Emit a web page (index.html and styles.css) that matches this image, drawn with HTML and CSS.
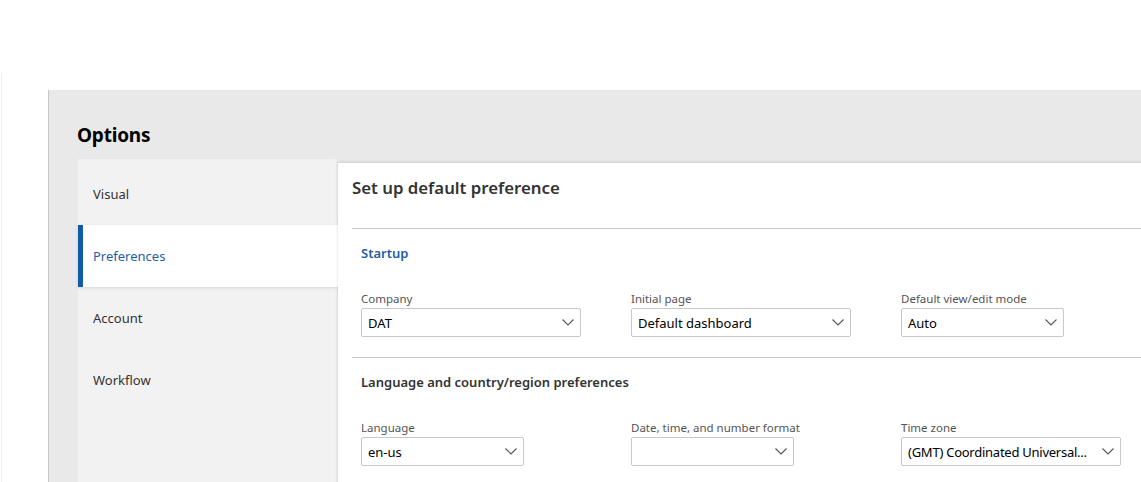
FILE: index.html
```html
<!DOCTYPE html>
<html lang="en">
<head>
<meta charset="utf-8">
<title>Options</title>
<link rel="stylesheet" href="styles.css">
</head>
<body>
<div class="frame">
  <div class="panel">
    <h1 class="title">Options</h1>
    <div class="body">
      <nav class="sidebar">
        <div class="nav-item">Visual</div>
        <div class="nav-item active">Preferences</div>
        <div class="nav-item">Account</div>
        <div class="nav-item">Workflow</div>
      </nav>
      <main class="main">
        <div class="main-title">Set up default preference</div>
        <section class="section">
          <div class="section-title blue">Startup</div>
          <div class="fields">
            <div class="field">
              <div class="label">Company</div>
              <div class="select wide"><span class="value">DAT</span><svg class="chev" viewBox="0 0 12 7" width="12" height="7"><path d="M0.5 0.5 L6 6 L11.5 0.5" fill="none" stroke="#555" stroke-width="1.1"/></svg></div>
            </div>
            <div class="field">
              <div class="label">Initial page</div>
              <div class="select wide"><span class="value">Default dashboard</span><svg class="chev" viewBox="0 0 12 7" width="12" height="7"><path d="M0.5 0.5 L6 6 L11.5 0.5" fill="none" stroke="#555" stroke-width="1.1"/></svg></div>
            </div>
            <div class="field">
              <div class="label">Default view/edit mode</div>
              <div class="select narrow"><span class="value">Auto</span><svg class="chev" viewBox="0 0 12 7" width="12" height="7"><path d="M0.5 0.5 L6 6 L11.5 0.5" fill="none" stroke="#555" stroke-width="1.1"/></svg></div>
            </div>
          </div>
        </section>
        <section class="section">
          <div class="section-title">Language and country/region preferences</div>
          <div class="fields">
            <div class="field">
              <div class="label">Language</div>
              <div class="select narrow"><span class="value">en-us</span><svg class="chev" viewBox="0 0 12 7" width="12" height="7"><path d="M0.5 0.5 L6 6 L11.5 0.5" fill="none" stroke="#555" stroke-width="1.1"/></svg></div>
            </div>
            <div class="field">
              <div class="label">Date, time, and number format</div>
              <div class="select narrow"><span class="value"></span><svg class="chev" viewBox="0 0 12 7" width="12" height="7"><path d="M0.5 0.5 L6 6 L11.5 0.5" fill="none" stroke="#555" stroke-width="1.1"/></svg></div>
            </div>
            <div class="field">
              <div class="label">Time zone</div>
              <div class="select wide"><span class="value tight">(GMT) Coordinated Universal...</span><svg class="chev" viewBox="0 0 12 7" width="12" height="7"><path d="M0.5 0.5 L6 6 L11.5 0.5" fill="none" stroke="#555" stroke-width="1.1"/></svg></div>
            </div>
          </div>
        </section>
      </main>
    </div>
  </div>
</div>
</body>
</html>
```
FILE: styles.css
```css
html, body {
  margin: 0;
  padding: 0;
  background: #fff;
  overflow: hidden;
  height: 482px;
}
body {
  font-family: "Noto Sans", "Open Sans", sans-serif;
  color: #333;
}
.frame {
  margin: 0 0 0 1px;
  padding-top: 73px;
  height: 482px;
  box-sizing: border-box;
  position: relative;
}
.frame::before {
  content: "";
  position: absolute;
  left: 0;
  top: 73px;
  bottom: 0;
  border-left: 1px solid #efefef;
}
.panel {
  margin: 17px 0 0 47px;
  background: #e9e9e9;
  border-left: 1px solid #c6c6c6;
  height: 420px;
  width: 1200px;
  padding-left: 29px;
  box-sizing: border-box;
}
.title {
  margin: 0 0 0 -1px;
  padding: 32px 0 0 0;
  height: 37px;
  font-size: 19px;
  font-weight: 700;
  color: #000;
  line-height: 26px;
  letter-spacing: -0.2px;
}
.body {
  display: flex;
  align-items: flex-start;
}
.sidebar {
  width: 260px;
  flex: none;
  background: #f2f2f2;
  padding-top: 4px;
  height: 380px;
  box-shadow: inset -2px 0 3px -2px rgba(0,0,0,0.12);
}
.nav-item {
  height: 62px;
  display: flex;
  align-items: center;
  padding-left: 15px;
  font-size: 13px;
  color: #333;
  position: relative;
}
.nav-item.active {
  background: #fff;
  color: #1f5da6;
  border-left: 5px solid #105aa6;
  padding-left: 10px;
  box-shadow: 0 1px 3px rgba(0,0,0,0.12);
  z-index: 1;
}
.main {
  flex: 1;
  margin-top: 4px;
  background: #fff;
  height: 380px;
  padding-left: 14px;
  box-shadow: 0 -1px 3px rgba(0,0,0,0.12);
  position: relative;
  z-index: 2;
}
.main-title {
  font-size: 16.8px;
  font-weight: 600;
  color: #333;
  height: 66px;
  line-height: 24px;
  padding-top: 13px;
  box-sizing: border-box;
  border-bottom: 1px solid #c8c8c8;
}
.section {
  padding-left: 9px;
  border-bottom: 1px solid #c8c8c8;
  height: 129px;
  box-sizing: border-box;
}
.section-title {
  font-size: 13px;
  font-weight: 600;
  color: #333;
  padding-top: 14px;
  line-height: 20px;
  height: 62px;
  box-sizing: border-box;
}
.section-title.blue {
  color: #1f5da6;
}
.fields {
  display: flex;
}
.field {
  width: 270px;
}
.label {
  font-size: 11.5px;
  color: #555;
  line-height: 16px;
  height: 17px;
}
.select {
  height: 29px;
  border: 1px solid #c8c8c8;
  border-radius: 2px;
  box-sizing: border-box;
  display: flex;
  align-items: center;
  padding: 0 6px 0 6px;
  font-size: 13px;
  color: #000;
}
.select.wide { width: 220px; }
.select.narrow { width: 163px; }
.value {
  flex: 1;
  white-space: nowrap;
  margin-right: 6px;
}
.value.tight {
  margin-right: 4px;
  letter-spacing: -0.25px;
}
.chev {
  flex: none;
}
```
